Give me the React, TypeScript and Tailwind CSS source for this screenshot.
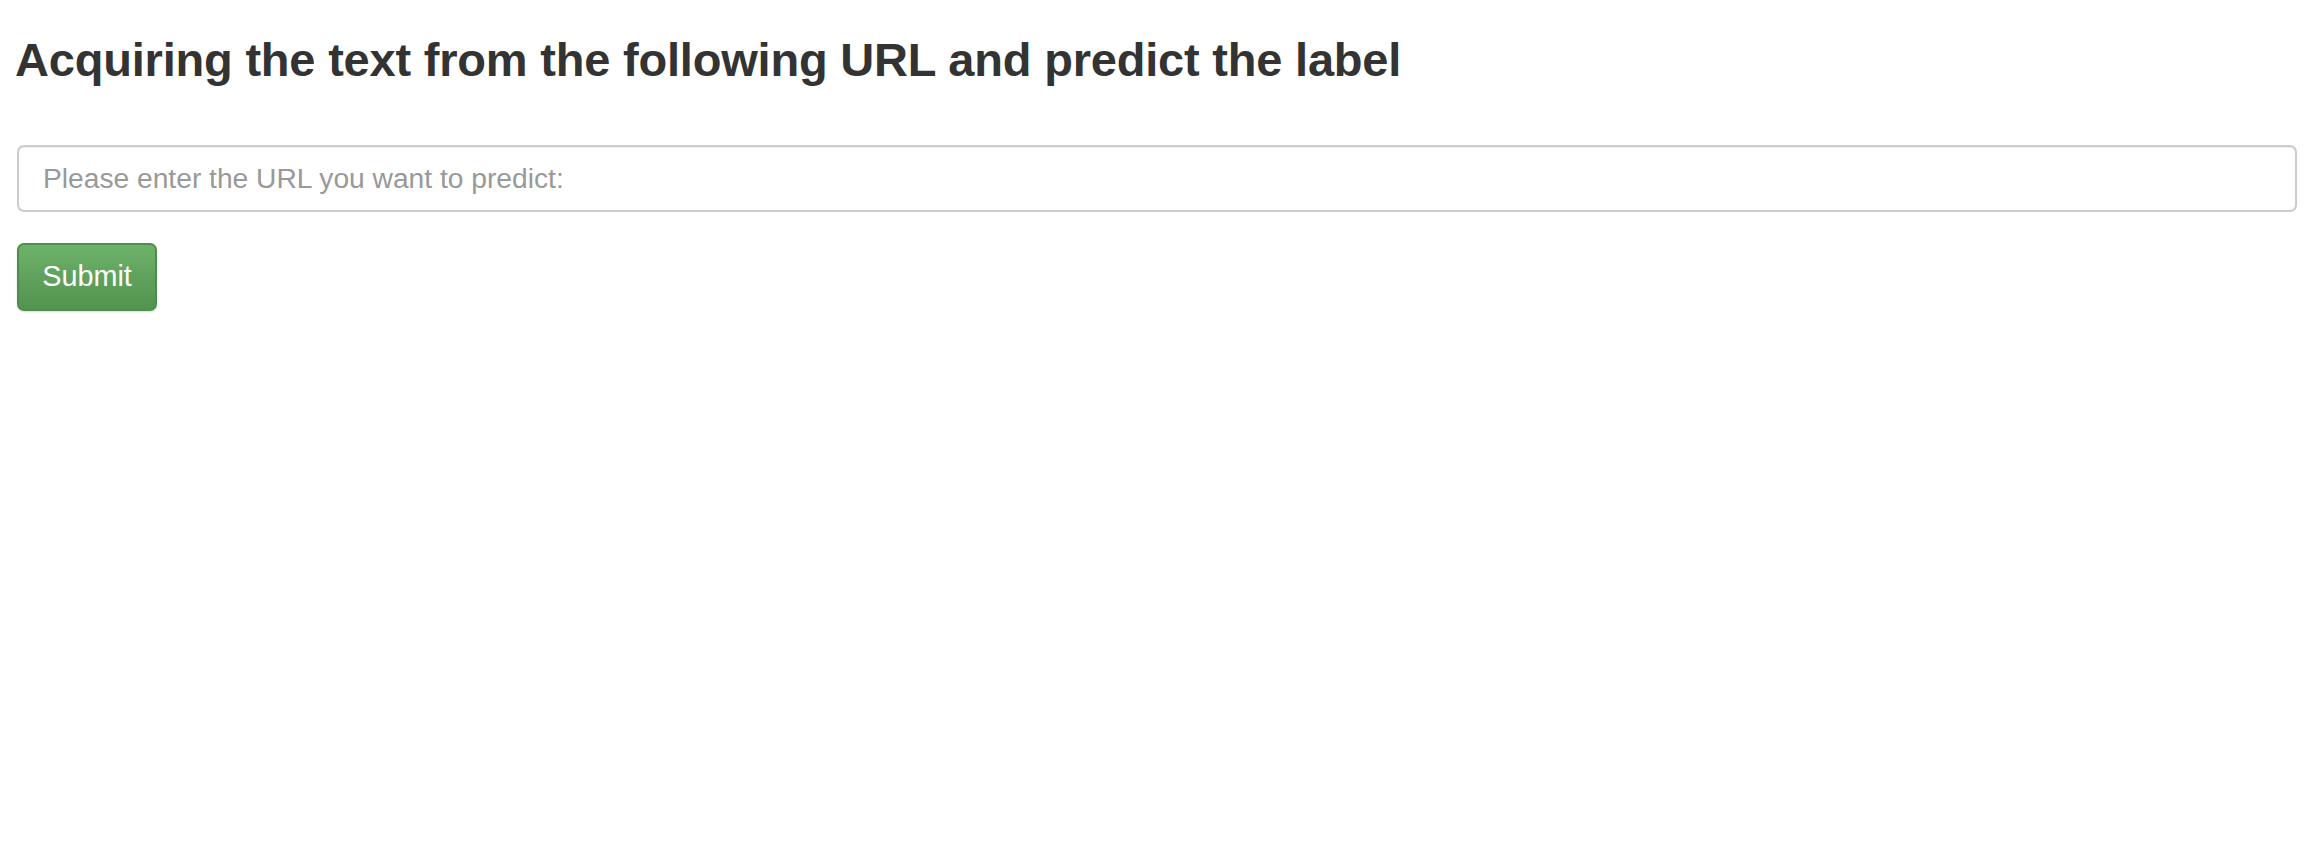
export default function App() {
  return (
    <div className="min-h-[868px] bg-white font-['Liberation_Sans',Arial,sans-serif] text-[#333]">
      <h1 className="pt-[33px] pl-[15px] text-[47px] font-bold leading-[53px] tracking-[-0.2px]">
        Acquiring the text from the following URL and predict the label
      </h1>
      <form className="px-[17px] pt-[59px]" onSubmit={(e) => e.preventDefault()}>
        <input
          type="text"
          placeholder="Please enter the URL you want to predict:"
          className="block h-[67px] w-[2280px] rounded-[7px] border-2 border-[#cccccc] px-[24px] text-[28.2px] text-[#555] placeholder:text-[#999] shadow-[inset_0_1px_1px_rgba(0,0,0,0.075)] outline-none"
        />
        <button
          type="submit"
          className="mt-[31px] block h-[68px] w-[140px] rounded-[7px] border-2 border-[#4b8f48] bg-gradient-to-b from-[#6db26a] to-[#53924f] text-[28.8px] text-white shadow-[0_1px_2px_rgba(0,0,0,0.15)]"
        >
          Submit
        </button>
      </form>
    </div>
  )
}
